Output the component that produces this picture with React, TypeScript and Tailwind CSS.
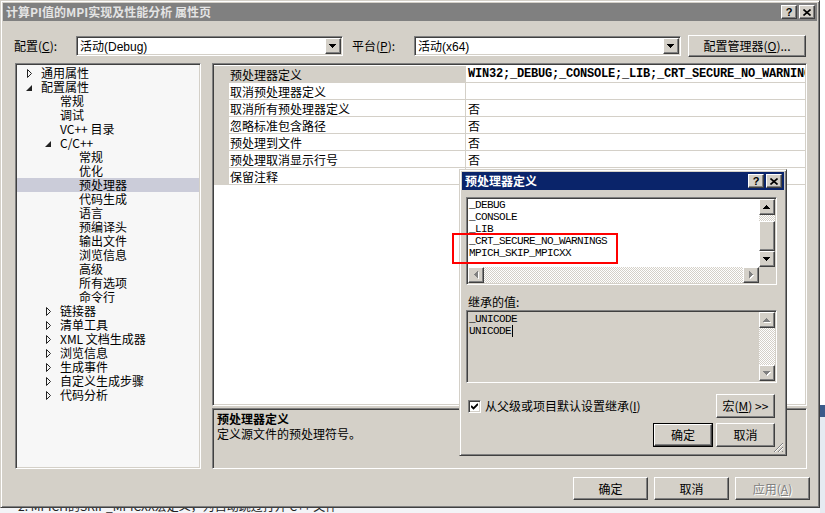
import React from 'react';

const RAISED =
  'border border-t-white border-l-white border-r-[#404040] border-b-[#404040] shadow-[inset_-1px_-1px_0_#808080,inset_1px_1px_0_#d4d0c8] bg-[#d4d0c8]';
const SUNKEN =
  'border border-t-[#808080] border-l-[#808080] border-r-white border-b-white shadow-[inset_1px_1px_0_#404040,inset_-1px_-1px_0_#d4d0c8] p-px';
const CHECKER =
  'bg-[image:repeating-conic-gradient(#d4d0c8_0_25%,#ffffff_0_50%)] bg-[length:2px_2px]';

const ARROWS: Record<string, { w: number; h: number; d: string }> = {
  down: { w: 7, h: 4, d: 'M0 0h7v1H0z M1 1h5v1H1z M2 2h3v1H2z M3 3h1v1H3z' },
  up: { w: 7, h: 4, d: 'M3 0h1v1H3z M2 1h3v1H2z M1 2h5v1H1z M0 3h7v1H0z' },
  left: { w: 4, h: 7, d: 'M3 0h1v7H3z M2 1h1v5H2z M1 2h1v3H1z M0 3h1v1H0z' },
  right: { w: 4, h: 7, d: 'M0 0h1v7H0z M1 1h1v5H1z M2 2h1v3H2z M3 3h1v1H3z' },
};

function Arrow({ dir, disabled }: { dir: string; disabled?: boolean }) {
  const a = ARROWS[dir];
  return (
    <svg width={a.w + 1} height={a.h + 1} shapeRendering="crispEdges" className="block">
      {disabled && <path d={a.d} fill="#ffffff" transform="translate(1,1)" />}
      <path d={a.d} fill={disabled ? '#808080' : '#000000'} />
    </svg>
  );
}

function ScrollBtn({ dir, disabled }: { dir: string; disabled?: boolean }) {
  return (
    <div className={`${RAISED} w-[16px] h-[16px] shrink-0 flex items-center justify-center`}>
      <Arrow dir={dir} disabled={disabled} />
    </div>
  );
}

function Combo({ text }: { text: string }) {
  return (
    <div className={`${SUNKEN} w-[267px] h-[20px] bg-white flex items-center shrink-0`}>
      <div className="flex-1 pl-[2px] leading-[16px] font-['Liberation_Sans','Noto_Sans_CJK_SC',sans-serif] text-[12px]">
        <span className="font-['Noto_Sans_CJK_SC',sans-serif]">活动</span>
        {text}
      </div>
      <ScrollBtn dir="down" />
    </div>
  );
}

function TitleButtons() {
  return (
    <div className="flex gap-[2px]">
      <div className={`${RAISED} w-[16px] h-[14px] flex items-center justify-center text-[11px] leading-[12px] font-bold font-['Liberation_Sans',sans-serif] text-black`}>
        ?
      </div>
      <div className={`${RAISED} w-[16px] h-[14px] flex items-center justify-center`}>
        <svg width="8" height="7" className="block">
          <path d="M0.5 0.5L7.5 6.5M7.5 0.5L0.5 6.5" stroke="#000" strokeWidth="1.6" />
        </svg>
      </div>
    </div>
  );
}

type TreeItem = { t: string; l: number; a?: 'c' | 'e'; sel?: boolean };
const tree: TreeItem[] = [
  { t: '通用属性', l: 0, a: 'c' },
  { t: '配置属性', l: 0, a: 'e' },
  { t: '常规', l: 1 },
  { t: '调试', l: 1 },
  { t: 'VC++ 目录', l: 1 },
  { t: 'C/C++', l: 1, a: 'e' },
  { t: '常规', l: 2 },
  { t: '优化', l: 2 },
  { t: '预处理器', l: 2, sel: true },
  { t: '代码生成', l: 2 },
  { t: '语言', l: 2 },
  { t: '预编译头', l: 2 },
  { t: '输出文件', l: 2 },
  { t: '浏览信息', l: 2 },
  { t: '高级', l: 2 },
  { t: '所有选项', l: 2 },
  { t: '命令行', l: 2 },
  { t: '链接器', l: 1, a: 'c' },
  { t: '清单工具', l: 1, a: 'c' },
  { t: 'XML 文档生成器', l: 1, a: 'c' },
  { t: '浏览信息', l: 1, a: 'c' },
  { t: '生成事件', l: 1, a: 'c' },
  { t: '自定义生成步骤', l: 1, a: 'c' },
  { t: '代码分析', l: 1, a: 'c' },
];
const INDENT = ['pl-[10px]', 'pl-[29px]', 'pl-[48px]'];

function TreeArrow({ a }: { a?: 'c' | 'e' }) {
  if (a === 'c')
    return (
      <svg width="6" height="9" className="block">
        <path d="M0.5 0.5L4.5 4.5L0.5 8.5Z" fill="none" stroke="#222" strokeWidth="1" />
      </svg>
    );
  if (a === 'e')
    return (
      <svg width="7" height="7" className="block -ml-[1px] mt-[2px]">
        <path d="M6 0L6 6L0 6Z" fill="#222" />
      </svg>
    );
  return null;
}

const props: { n: string; v: string; sel?: boolean }[] = [
  {
    n: '预处理器定义',
    v: 'WIN32;_DEBUG;_CONSOLE;_LIB;_CRT_SECURE_NO_WARNINGS;MPICH_SKIP_MPICXX;%(PreprocessorDefinitions)',
    sel: true,
  },
  { n: '取消预处理器定义', v: '' },
  { n: '取消所有预处理器定义', v: '否' },
  { n: '忽略标准包含路径', v: '否' },
  { n: '预处理到文件', v: '否' },
  { n: '预处理取消显示行号', v: '否' },
  { n: '保留注释', v: '' },
];

const MONO = "font-['Liberation_Mono',monospace] text-[11px] tracking-[-0.6px] leading-[12px]";

function Dialog() {
  return (
    <div className="absolute left-[458px] top-[168px] w-[328px] h-[287px] bg-[#d4d0c8] border border-t-[#d4d0c8] border-l-[#d4d0c8] border-r-[#404040] border-b-[#404040] shadow-[inset_1px_1px_0_#fff,inset_-1px_-1px_0_#808080] p-[2px] flex flex-col">
      <div className="h-[18px] bg-[#0a246a] flex items-center pl-[3px] pr-[2px] shrink-0">
        <span className="flex-1 text-white font-bold text-[12px] leading-[16px]">预处理器定义</span>
        <TitleButtons />
      </div>
      <div className="pl-[4px] flex flex-col">
        <div className={`${SUNKEN} mt-[7px] w-[311px] h-[88px] bg-white flex flex-col`}>
          <div className="flex h-[68px]">
            <div className={`flex-1 overflow-hidden pl-[1px] text-black ${MONO}`}>
              <div>_DEBUG</div>
              <div>_CONSOLE</div>
              <div>_LIB</div>
              <div>_CRT_SECURE_NO_WARNINGS</div>
              <div>MPICH_SKIP_MPICXX</div>
            </div>
            <div className="w-[16px] flex flex-col">
              <ScrollBtn dir="up" />
              <div className={`h-[6px] ${CHECKER}`} />
              <div className={`${RAISED} h-[30px]`} />
              <ScrollBtn dir="down" />
            </div>
          </div>
          <div className="flex h-[16px]">
            <div className="w-[291px] flex">
              <ScrollBtn dir="left" disabled />
              <div className={`flex-1 ${CHECKER}`} />
              <ScrollBtn dir="right" disabled />
            </div>
            <div className="w-[16px] bg-[#d4d0c8]" />
          </div>
        </div>
        <div className="mt-[11px] h-[12px] pl-[2px] flex items-center text-[12px] leading-[12px]">继承的值:</div>
        <div className={`${SUNKEN} mt-[2px] w-[311px] h-[73px] bg-[#d4d0c8] flex`}>
          <div className={`flex-1 pl-[1px] pt-[1px] text-black ${MONO}`}>
            <div>_UNICODE</div>
            <div className="flex items-center">
              UNICODE<span className="inline-block w-px h-[12px] bg-black ml-[1px]" />
            </div>
          </div>
          <div className="w-[16px] flex flex-col">
            <ScrollBtn dir="up" disabled />
            <div className={`flex-1 ${CHECKER}`} />
            <ScrollBtn dir="down" disabled />
          </div>
        </div>
        <div className="mt-[11px] h-[24px] flex items-center">
          <div className={`${SUNKEN} ml-[2px] w-[13px] h-[13px] bg-white flex items-center justify-center`}>
            <svg width="7" height="7" className="block">
              <path d="M0 3L2.5 5.5L7 1" fill="none" stroke="#000" strokeWidth="1.8" />
            </svg>
          </div>
          <span className="ml-[4px] text-[12px] leading-[14px]">
            从父级或项目默认设置继承(<u>I</u>)
          </span>
          <div className={`${RAISED} ml-auto mr-[9px] w-[59px] h-[24px] flex items-center justify-center text-[12px] leading-[14px]`}>
            宏(<u>M</u>) &gt;&gt;
          </div>
        </div>
        <div className="mt-[5px] flex justify-end gap-[3px] mr-[9px]">
          <div className="w-[60px] h-[24px] border border-black">
            <div className={`${RAISED} w-full h-full flex items-center justify-center text-[12px] leading-[14px]`}>确定</div>
          </div>
          <div className={`${RAISED} w-[59px] h-[24px] flex items-center justify-center text-[12px] leading-[14px]`}>取消</div>
        </div>
      </div>
      <svg width="11" height="11" className="absolute right-[2px] bottom-[2px]">
        <path d="M10 1L1 10M10 5L5 10M10 9L9 10" stroke="#808080" strokeWidth="1" />
        <path d="M10 2L2 10M10 6L6 10" stroke="#ffffff" strokeWidth="1" />
      </svg>
    </div>
  );
}

function Window() {
  return (
    <div className="relative h-[508px] bg-[#d4d0c8] border border-t-[#d4d0c8] border-l-[#d4d0c8] border-r-[#404040] border-b-[#404040] shadow-[inset_1px_1px_0_#fff,inset_-1px_-1px_0_#808080] p-[2px] flex flex-col">
      <div className="h-[18px] bg-[#808080] flex items-center pl-[3px] pr-[2px] shrink-0">
        <span className="flex-1 text-[#e4e4e4] font-bold text-[12px] leading-[16px]">计算PI值的MPI实现及性能分析 属性页</span>
        <TitleButtons />
      </div>

      <div className="flex items-center h-[22px] mt-[14px] pl-[11px]">
        <div className="w-[62px] text-[12px] leading-[14px]">
          配置(<u>C</u>):
        </div>
        <Combo text="(Debug)" />
        <div className="w-[62px] ml-[9px] text-[12px] leading-[14px]">
          平台(<u>P</u>):
        </div>
        <Combo text="(x64)" />
        <div className={`${RAISED} ml-[7px] w-[118px] h-[22px] flex items-center justify-center text-[12px] leading-[14px]`}>
          配置管理器(<u>O</u>)...
        </div>
      </div>

      <div className="flex mt-[6px] pl-[12px]">
        <div className={`${SUNKEN} w-[186px] h-[406px] bg-[#f7f7f7] pt-[2px]`}>
          {tree.map((it, i) => (
            <div
              key={i}
              className={`h-[14px] flex items-center ${INDENT[it.l]} ${it.sel ? 'bg-[#cbccd9]' : ''}`}
            >
              <div className="w-[14px] shrink-0 flex items-center">
                <TreeArrow a={it.a} />
              </div>
              <span className="text-[12px] leading-[14px] whitespace-nowrap">{it.t}</span>
            </div>
          ))}
        </div>

        <div className="ml-[11px] w-[595px] flex flex-col">
          <div className={`${SUNKEN} h-[343px] bg-white pt-[2px]`}>
            {props.map((p, i) => (
              <div key={i} className="flex h-[17px]">
                <div className="w-[15px] bg-[#d4d0c8] shrink-0" />
                <div
                  className={`w-[237px] shrink-0 border-b border-r border-[#d4d0c8] pl-[1px] flex items-center text-[12px] leading-[15px] ${
                    p.sel ? 'bg-[#d4d0c8]' : 'bg-white'
                  }`}
                >
                  {p.n}
                </div>
                <div className="flex-1 min-w-0 overflow-hidden border-b border-[#d4d0c8] pl-[2px] flex items-center">
                  {p.sel ? (
                    <span className="whitespace-nowrap font-['Liberation_Mono',monospace] font-bold text-[12px] leading-[15px] tracking-[-0.2px]">
                      {p.v}
                    </span>
                  ) : (
                    <span className="text-[12px] leading-[15px]">{p.v}</span>
                  )}
                </div>
              </div>
            ))}
          </div>
          <div className={`${SUNKEN} mt-[2px] h-[61px] bg-[#d4d0c8] pl-[4px] pt-[2px] text-[12px] leading-[15px]`}>
            <div className="font-bold">预处理器定义</div>
            <div>定义源文件的预处理符号。</div>
          </div>
        </div>
      </div>

      <div className="flex justify-end gap-[6px] mt-[8px] pr-[7px]">
        <div className={`${RAISED} w-[75px] h-[23px] flex items-center justify-center text-[12px] leading-[14px]`}>确定</div>
        <div className={`${RAISED} w-[75px] h-[23px] flex items-center justify-center text-[12px] leading-[14px]`}>取消</div>
        <div className={`${RAISED} w-[75px] h-[23px] flex items-center justify-center text-[12px] leading-[14px] text-[#808080] [text-shadow:1px_1px_0_#fff]`}>
          应用(<u>A</u>)
        </div>
      </div>

      <Dialog />
      <div className="absolute left-[451px] top-[232px] w-[166px] h-[31px] border-2 border-[#ff0000]" />
    </div>
  );
}

export default function App() {
  return (
    <div className="flex w-[825px] h-[513px] overflow-hidden bg-white font-['Noto_Sans_CJK_SC',sans-serif] text-[12px] leading-none text-black">
      <div className="flex flex-col w-[820px] shrink-0">
        <Window />
        <div className="h-[5px] bg-[#f3f4f7] overflow-hidden pl-[18px]">
          <div className="-mt-[8px] text-[12px] leading-[12px] whitespace-nowrap text-[#222]">
            2. MPICH的SKIP_MPICXX宏定义，为自动跳过打开 C++ 文件
          </div>
        </div>
      </div>
      <div className="flex flex-col flex-1">
        <div className="h-[405px] bg-white" />
        <div className="h-[12px] bg-[#3b5b8a]" />
        <div className="flex-1 bg-[#e6ebf2]" />
      </div>
    </div>
  );
}
